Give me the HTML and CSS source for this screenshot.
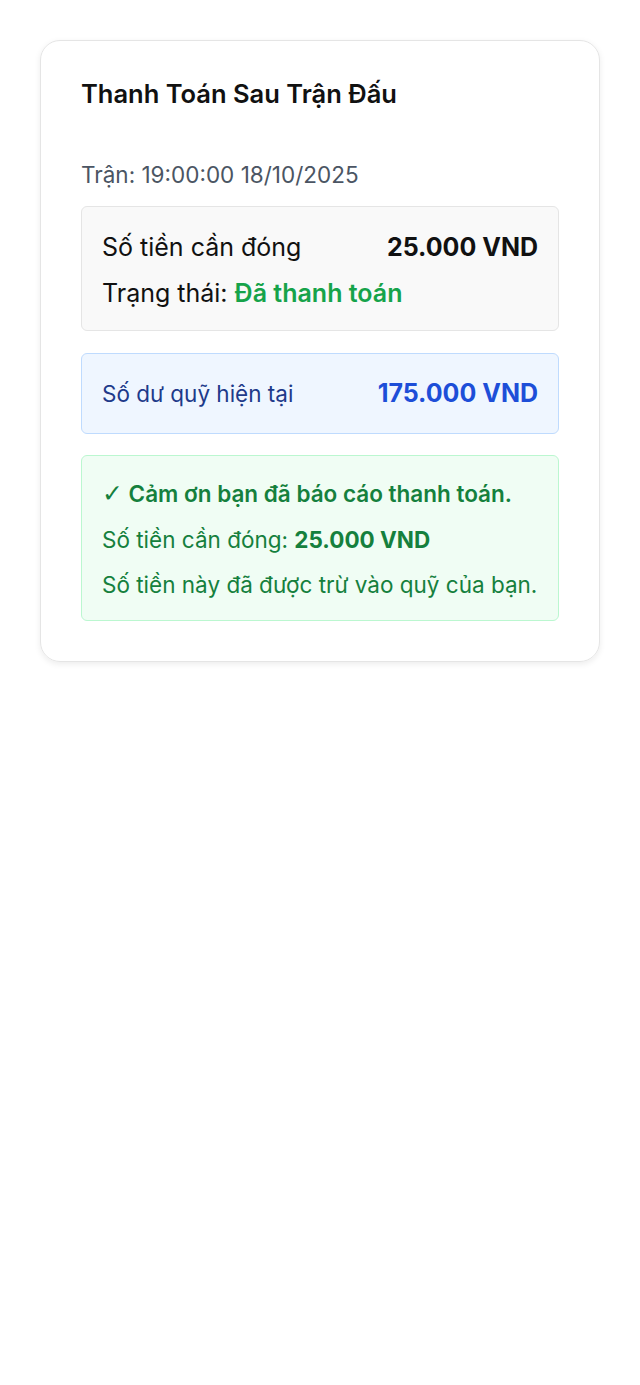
FILE: index.html
```html
<!DOCTYPE html>
<html lang="vi">
<head>
  <meta charset="UTF-8">
  <title>Thanh Toán Sau Trận Đấu</title>
  <link rel="stylesheet" href="styles.css">
</head>
<body>
  <div class="card">
    <h2 class="card-title">Thanh Toán Sau Trận Đấu</h2>

    <div class="match-time">Trận: 19:00:00 18/10/2025</div>

    <div class="box box-info">
      <div class="row">
        <span>Số tiền cần đóng</span>
        <strong>25.000 VND</strong>
      </div>
      <div class="row">
        <span>Trạng thái: <span class="status-paid">Đã thanh toán</span></span>
      </div>
    </div>

    <div class="box box-balance">
      <div class="row">
        <span class="balance-label">Số dư quỹ hiện tại</span>
        <strong class="balance-value">175.000 VND</strong>
      </div>
    </div>

    <div class="box box-success">
      <p class="success-title"><span class="check">✓</span> Cảm ơn bạn đã báo cáo thanh toán.</p>
      <p>Số tiền cần đóng: <strong>25.000 VND</strong></p>
      <p>Số tiền này đã được trừ vào quỹ của bạn.</p>
    </div>
  </div>
</body>
</html>
```

FILE: styles.css
```css
body {
  margin: 0;
  padding: 40px;
  font-family: Inter, "Noto Sans", sans-serif;
  color: #111;
  background: #fff;
}

.card {
  border: 1px solid #e5e5e5;
  border-radius: 20px;
  padding: 40px;
  box-shadow: 0 2px 6px rgba(0, 0, 0, 0.08);
}

.card-title {
  margin: 0 0 53px;
  font-size: 25.5px;
  font-weight: 600;
  line-height: 26px;
}

.match-time {
  font-size: 22.5px;
  line-height: 30px;
  color: #4b5563;
  margin-bottom: 16px;
}

.box {
  border: 1px solid #e5e5e5;
  border-radius: 6px;
  padding: 0 20px;
}

.row {
  display: flex;
  justify-content: space-between;
  align-items: center;
  font-size: 25px;
  line-height: 46px;
}

.row strong {
  font-weight: 700;
}

.box-info {
  background: #f9f9f9;
  padding-top: 17px;
  padding-bottom: 14px;
  margin-bottom: 22px;
}

.status-paid {
  color: #16a34a;
  font-weight: 600;
}

.box-balance {
  background: #eff6ff;
  border-color: #bfdbfe;
  padding-top: 20px;
  padding-bottom: 20px;
  margin-bottom: 21px;
}

.box-balance .row {
  line-height: 39px;
}

.balance-label {
  font-size: 22.5px;
  color: #1e3a8a;
}

.balance-value {
  font-size: 25px;
  color: #1d4ed8;
}

.box-success {
  background: #f0fdf4;
  border-color: #bbf7d0;
  color: #15803d;
  padding-top: 15px;
  padding-bottom: 12px;
}

.box-success p {
  margin: 0;
  font-size: 22.5px;
  line-height: 45.5px;
}

.box-success .success-title {
  font-weight: 600;
}

.check {
  font-family: "DejaVu Sans", sans-serif;
  font-size: 25px;
  font-weight: 400;
}
```
